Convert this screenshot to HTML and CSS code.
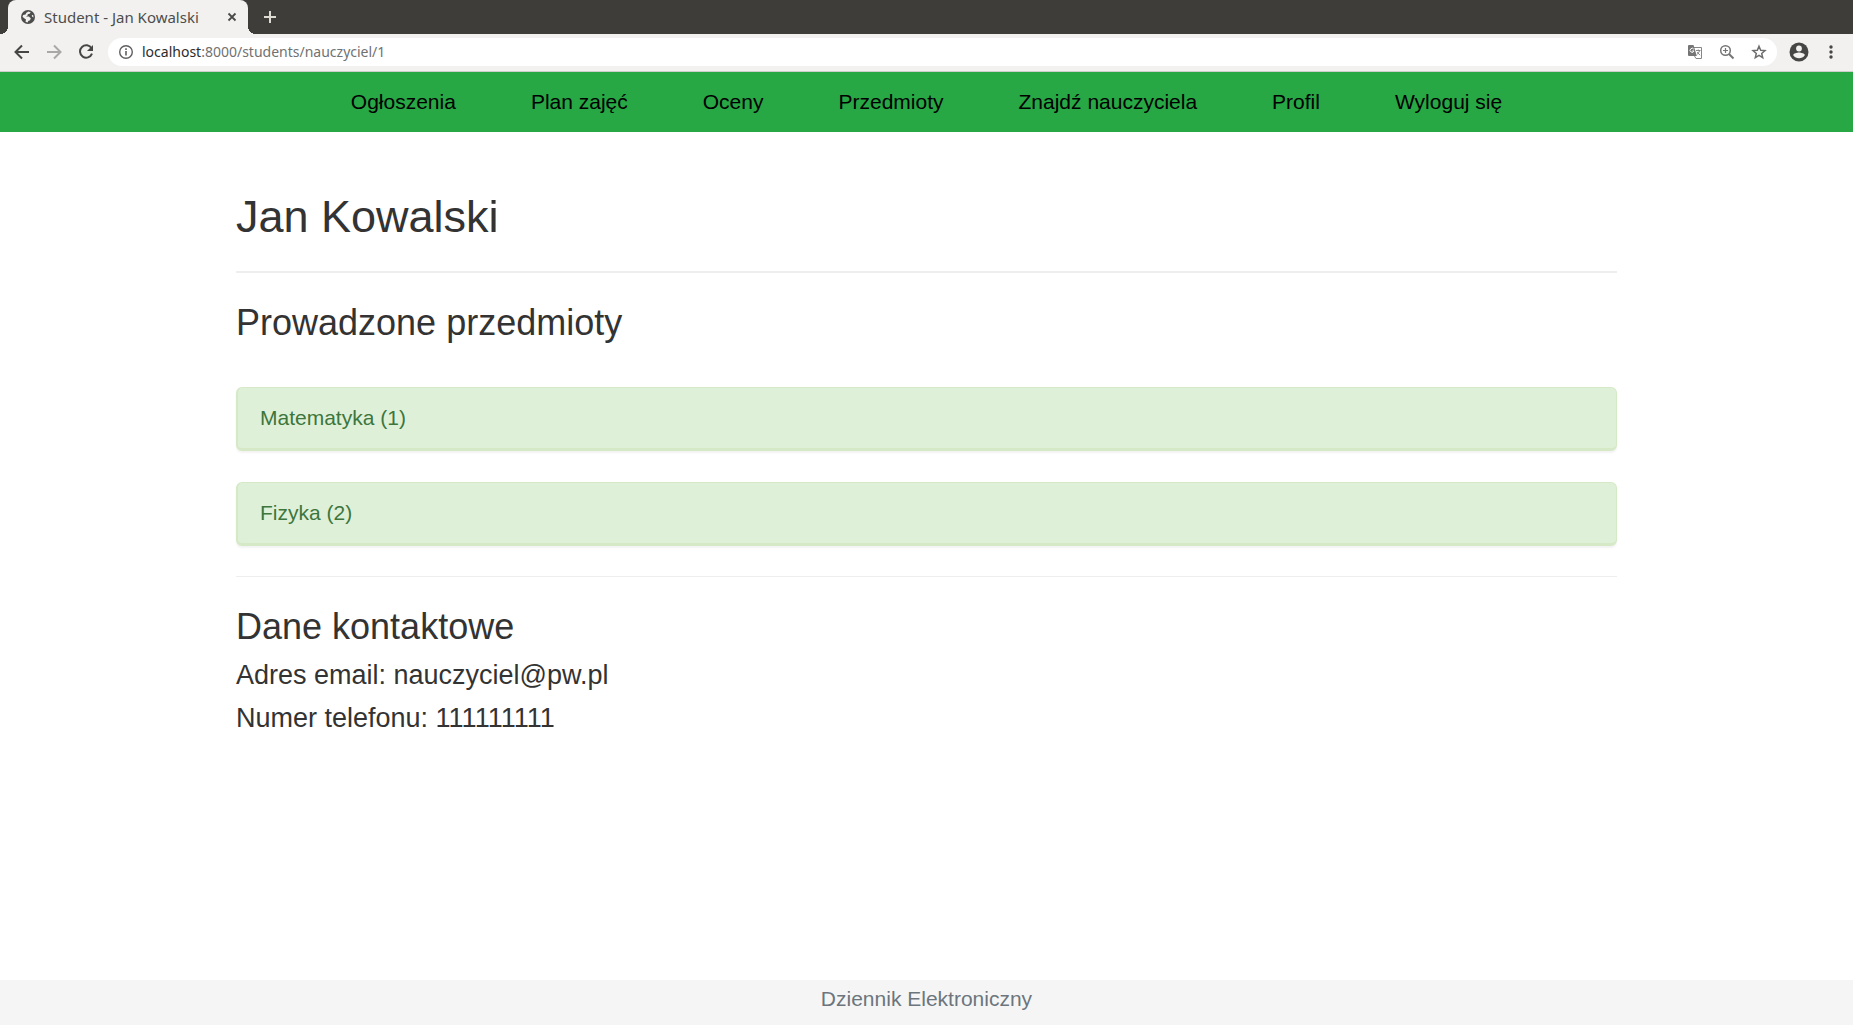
FILE: index.html
```html
<!DOCTYPE html>
<html lang="pl">
<head>
<meta charset="utf-8">
<title>Student - Jan Kowalski</title>
<link rel="stylesheet" href="styles.css">
</head>
<body>
<div class="browser">
  <div class="tabstrip">
    <div class="tab">
      <svg class="favicon" viewBox="0 0 14 14" aria-hidden="true"><circle cx="7" cy="7" r="7" fill="#4d4d4b"/><path d="M7.500 1.500 9.800 2.400 8.200 4H6.800L6.600 5.600 5 6.400H7.800L9.800 8.200 9 10.200 7.200 11 6.600 12.500 4.500 11.800 5 9.600 3.200 8.200 1.500 6.800 2.200 5 4.500 4.600 5.400 2.800Z" fill="#f2f1f0"/><path d="M10.800 4.800 12.200 5.200 12.500 7.400 11 6.600Z" fill="#f2f1f0"/></svg>
      <span class="tab-title">Student - Jan Kowalski</span>
      <button class="icon-button tab-close" aria-label="Zamknij kartę"><svg width="10" height="10" viewBox="0 0 10 10"><path d="M1.500 1.500 8.500 8.500M8.500 1.500 1.500 8.500" stroke="#4a4a48" stroke-width="1.800" fill="none"/></svg></button>
    </div>
    <button class="icon-button new-tab" aria-label="Nowa karta"><svg width="12" height="12" viewBox="0 0 12 12"><path d="M6 0V12M0 6H12" stroke="#dedbd2" stroke-width="2" fill="none"/></svg></button>
  </div>
  <div class="toolbar">
    <button class="icon-button" aria-label="Wstecz"><svg width="16" height="16" viewBox="0 0 16 16"><path d="M15 8H2M8 1.500 1.500 8 8 14.500" stroke="#464644" stroke-width="2" fill="none"/></svg></button>
    <button class="icon-button" aria-label="Dalej"><svg width="16" height="16" viewBox="0 0 16 16"><path d="M1 8H14M8 1.500 14.500 8 8 14.500" stroke="#a9a8a6" stroke-width="2" fill="none"/></svg></button>
    <button class="icon-button" aria-label="Odśwież"><svg width="16" height="16" viewBox="0 0 16 16"><path d="M13.600 4.400A6.200 6.200 0 1 0 14 9.700" stroke="#464644" stroke-width="2" fill="none"/><path d="M15 1V7H9Z" fill="#464644"/></svg></button>
    <div class="omnibox">
      <svg width="16" height="16" viewBox="0 0 16 16" aria-hidden="true"><circle cx="8" cy="8" r="6.300" stroke="#5f5f5f" stroke-width="1.400" fill="none"/><path d="M8 7V11.500M8 4.300V5.900" stroke="#5f5f5f" stroke-width="1.600"/></svg>
      <span class="url"><span class="url-host">localhost</span>:8000/students/nauczyciel/1</span>
      <div class="omnibox-actions">
        <button class="icon-button" aria-label="Przetłumacz"><svg width="16" height="16" viewBox="0 0 16 16"><path d="M6 3.500H14.500V14.500H9L7.500 12" fill="#fff" stroke="#868686"/><path d="M2 1H6.500L9.800 12H2A1 1 0 0 1 1 11V2A1 1 0 0 1 2 1Z" fill="#757575"/><path d="M6.800 5.200A2 2 0 1 0 7 7H5.200" fill="none" stroke="#fff"/><path d="M9 6.500H13.500M11.200 5.500V6.500M12.700 6.500Q12 9 9.800 10.500M10.200 8 13 11.200" fill="none" stroke="#868686"/></svg></button>
        <button class="icon-button" aria-label="Powiększenie"><svg width="16" height="16" viewBox="0 0 16 16"><circle cx="6.500" cy="6.500" r="4.800" fill="none" stroke="#757575" stroke-width="1.500"/><path d="M6.500 4V9M4 6.500H9" stroke="#757575" stroke-width="1.200"/><path d="M10 10 14.500 14.500" stroke="#757575" stroke-width="1.900"/></svg></button>
        <button class="icon-button" aria-label="Dodaj zakładkę"><svg width="16" height="16" viewBox="0 0 16 16"><path d="M8 2.200 9.700 6.200 14 6.600 10.700 9.400 11.700 13.600 8 11.400 4.300 13.600 5.300 9.400 2 6.600 6.300 6.200Z" fill="none" stroke="#6d6d6d" stroke-width="1.500"/></svg></button>
      </div>
    </div>
    <button class="icon-button profile" aria-label="Konto"><svg width="20" height="20" viewBox="0 0 20 20"><circle cx="10" cy="10" r="9.500" fill="#464644"/><circle cx="10" cy="6.500" r="2.900" fill="#f2f1f0"/><path d="M4.200 13.200C4.200 11.500 8 10.500 10 10.500S15.800 11.500 15.800 13.200A7 7 0 0 1 4.200 13.200Z" fill="#f2f1f0"/></svg></button>
    <button class="icon-button" aria-label="Menu"><svg width="16" height="16" viewBox="0 0 16 16"><g fill="#464644"><circle cx="8" cy="3" r="1.700"/><circle cx="8" cy="8" r="1.700"/><circle cx="8" cy="13" r="1.700"/></g></svg></button>
  </div>
</div>
<nav class="site-nav">
  <a href="#">Ogłoszenia</a>
  <a href="#">Plan zajęć</a>
  <a href="#">Oceny</a>
  <a href="#">Przedmioty</a>
  <a href="#">Znajdź nauczyciela</a>
  <a href="#">Profil</a>
  <a href="#">Wyloguj się</a>
</nav>
<main class="content">
  <h1>Jan Kowalski</h1>
  <hr class="rule rule-strong">
  <section>
    <h2>Prowadzone przedmioty</h2>
    <div class="subjects">
      <a class="subject" href="#">Matematyka (1)</a>
      <a class="subject" href="#">Fizyka (2)</a>
    </div>
  </section>
  <hr class="rule">
  <section class="contact">
    <h2>Dane kontaktowe</h2>
    <p>Adres email: nauczyciel@pw.pl</p>
    <p>Numer telefonu: 111111111</p>
  </section>
</main>
<footer class="site-footer">Dziennik Elektroniczny</footer>
</body>
</html>
```
FILE: styles.css
```css
* {
  box-sizing: border-box;
}

body {
  display: flex;
  flex-direction: column;
  min-height: 100vh;
  margin: 0;
  background: #fff;
  color: #333;
  font: 21px/30px "Liberation Sans", Arial, sans-serif;
}

a {
  color: inherit;
  text-decoration: none;
}

/* Browser window */
.browser {
  border-bottom: 1px solid #cfcecc;
  background: #f2f1f0;
  color: #4d4d4b;
  font: 14px/20px "Noto Sans", sans-serif;
}

.icon-button {
  display: flex;
  padding: 0;
  border: 0;
  background: none;
}

.tabstrip {
  display: flex;
  align-items: center;
  height: 34px;
  padding-left: 8px;
  background: #3e3d39;
}

.tab {
  position: relative;
  display: flex;
  align-items: center;
  width: 240px;
  height: 34px;
  padding: 0 11px 0 13px;
  border-radius: 8px 8px 0 0;
  background: #f2f1f0;
}

.tab::before,
.tab::after {
  content: "";
  position: absolute;
  bottom: 0;
  width: 8px;
  height: 8px;
}

.tab::before {
  right: 100%;
  background: radial-gradient(circle at 0 0, #3e3d39 8px, #f2f1f0 8px);
}

.tab::after {
  left: 100%;
  background: radial-gradient(circle at 100% 0, #3e3d39 8px, #f2f1f0 8px);
}

.favicon {
  width: 14px;
  height: 14px;
}

.tab-title {
  flex: 1;
  margin-left: 9px;
  font-size: 15px;
  white-space: nowrap;
}

.new-tab {
  margin-left: 16px;
}

.toolbar {
  display: flex;
  align-items: center;
  gap: 16px;
  height: 37px;
  padding: 0 14px 1px;
}

.omnibox {
  display: flex;
  flex: 1;
  align-items: center;
  gap: 8px;
  height: 28px;
  margin-right: -4px;
  margin-left: -2px;
  padding: 0 10px;
  border-radius: 14px;
  background: #fff;
}

.url {
  flex: 1;
  color: #717171;
}

.url-host {
  color: #2b2b2b;
}

.omnibox-actions {
  display: flex;
  gap: 16px;
}

.profile {
  margin-right: -2px;
}

/* Site navigation */
.site-nav {
  display: flex;
  flex-wrap: wrap;
  justify-content: center;
  column-gap: 75px;
  padding: 15px;
  background: #28a745;
  color: #000;
}

/* Page content */
.content {
  flex: 1;
  width: 100%;
  max-width: 1441px;
  margin: 0 auto;
  padding: 60px 30px;
}

h1,
h2,
p {
  margin: 0;
  font-weight: 400;
}

h1 {
  font-size: 45px;
  line-height: 50px;
}

h2 {
  font-size: 36px;
  line-height: 40px;
}

.rule {
  height: 1px;
  margin: 30px 0;
  border: 0;
  background: #eee;
}

.rule-strong {
  height: 2px;
  margin-top: 29px;
}

.subjects {
  display: grid;
  gap: 31px;
  margin-top: 44px;
}

.subject {
  padding: 15px 22px;
  border: solid #d6e9c6;
  border-width: 1px 1px 3px 2px;
  border-radius: 6px;
  background: #dff0d8;
  box-shadow: 0 2px 2px rgba(0, 0, 0, 0.05);
  color: #3c763d;
}

.contact {
  display: grid;
  gap: 13px;
}

.contact p {
  font-size: 27px;
}

.site-footer {
  padding: 4px 15px 11px;
  background: #f5f5f5;
  color: #6c757d;
  text-align: center;
}
```
